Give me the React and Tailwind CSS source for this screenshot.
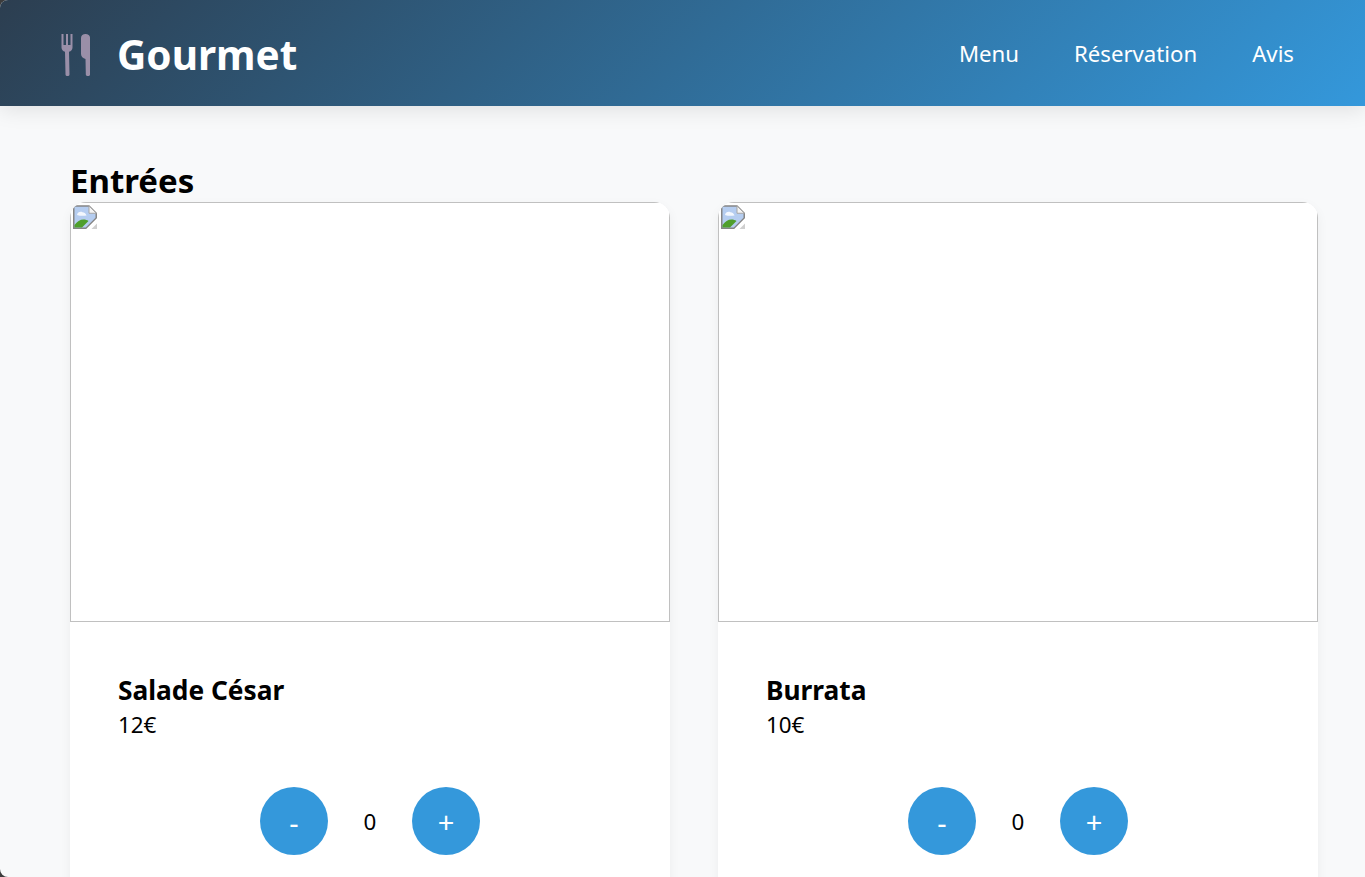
const dishes = [
  { name: "Salade César", price: "12€" },
  { name: "Burrata", price: "10€" },
]

function BrokenImage() {
  return (
    <svg width="24" height="24" viewBox="0 0 24 24" className="block">
      <path d="M.75 1h15.250l7.250 7.250V13L13 23.250H.75z" fill="#b5cdf0" stroke="#858585" strokeWidth="1.500" />
      <path d="M16 1v7.250h7.250z" fill="#f4f4f4" stroke="#a5a5a5" />
      <path d="M4 10c.5-3 3.500-4 5.500-2.800C11.500 7.200 13 8.500 13.500 10.500 10 11 7 11 4 10z" fill="#f3f7fd" />
      <path d="M1.500 22.500v-2.500c2.500-3.500 5.500-5.500 9-5.500 2 0 3.500.5 5 1.500L9 22.500z" fill="#4f9f2c" />
      <path d="M24 13.500L13.500 24h4.500l6-6z" fill="#fff" />
      <path d="M24 18.500V24h-5.500z" fill="#cfcfcf" />
    </svg>
  )
}

function UtensilsIcon() {
  return (
    <svg width="32" height="44" viewBox="0 0 32 44" fill="#9a8fa8">
      <path d="M1.500 1h2v11h2.500V1h2v11h2.500V1h2v13.500c0 2.200-1.500 3.800-3.500 4.300L9.500 41.500c0 2-4 2-4 0L5 18.800C3 18.300 1.500 16.700 1.500 14.500z" />
      <path d="M25.500 1C28 1 30 2.500 30 4.500v37c0 2-4 2-4.200 0L25.500 26c-2.500-.6-4.500-2.500-4.500-5V5c0-2.500 2-4 4.500-4z" />
    </svg>
  )
}

function DishCard({ name, price }) {
  return (
    <article className="overflow-hidden rounded-2xl bg-white shadow-[0_4px_12px_rgba(0,0,0,0.05)]">
      <div className="h-[420px] border border-[#c0c0c0] bg-white pl-[2px] pt-[2px]">
        <BrokenImage />
      </div>
      <div className="p-12">
        <h3 className="text-[26.300px] font-bold leading-[40px] text-black">{name}</h3>
        <p className="text-[22.400px] leading-[30px] text-black">{price}</p>
        <div className="mt-[47px] flex items-center justify-center gap-6">
          <button className="flex size-[68px] items-center justify-center rounded-full bg-[#3498db] pt-[3px] text-[29px] text-white">-</button>
          <span className="w-[36px] pt-[2px] text-center text-[22.400px] text-black">0</span>
          <button className="flex size-[68px] items-center justify-center rounded-full bg-[#3498db] pt-[2px] text-[29px] text-white">+</button>
        </div>
      </div>
    </article>
  )
}

export default function App() {
  return (
    <div className="h-[877px] overflow-hidden bg-[#3c3c3c] font-['Noto_Sans','Open_Sans',sans-serif]">
      <div className="h-full overflow-hidden rounded-l-lg bg-[#f8f9fa]">
        <header className="flex h-[106px] items-center justify-between bg-[linear-gradient(135deg,#2c3e50,#3498db)] pl-[60px] pr-[71px] pt-[2px] shadow-[0_4px_20px_rgba(0,0,0,0.1)]">
          <div className="mt-[2px] flex items-center gap-[25px]">
            <UtensilsIcon />
            <span className="text-[40.500px] font-bold text-white">Gourmet</span>
          </div>
          <nav className="flex gap-[55px] text-[22.200px] text-white">
            <a href="#">Menu</a>
            <a href="#">Réservation</a>
            <a href="#">Avis</a>
          </nav>
        </header>

        <main className="pl-[70px] pr-[47px] pt-[53px]">
          <h2 className="text-[33px] font-bold leading-[43px] text-black">Entrées</h2>
          <div className="grid grid-cols-2 gap-12">
            {dishes.map((dish) => (
              <DishCard key={dish.name} {...dish} />
            ))}
          </div>
        </main>
      </div>
    </div>
  )
}
